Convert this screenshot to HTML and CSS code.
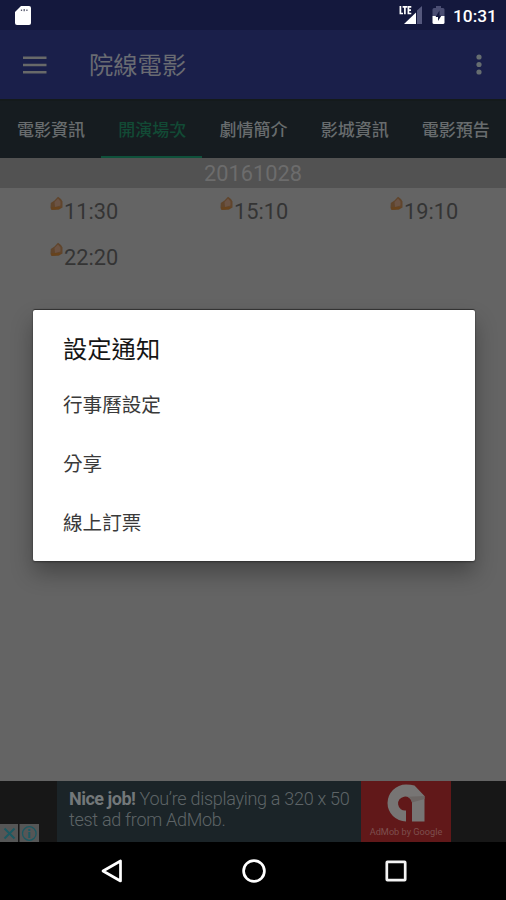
FILE: index.html
```html
<!DOCTYPE html>
<html lang="zh-Hant">
<head>
<meta charset="utf-8">
<title>院線電影</title>
<link rel="stylesheet" href="styles.css">
</head>
<body>
<svg class="defs" width="0" height="0" aria-hidden="true">
  <symbol id="ticket" viewBox="0 0 13 15">
    <path d="M.8 7 4.500 4.500 8 .8l3 2.200 1.500 2.500v6L9 13.600 1.500 14 .5 12z" fill="#60452c"/>
    <path d="M4.500 6 8 2.500l2.500 3v4L5 11z" fill="#6b5344"/>
    <path d="M1 11.500 6 11l5 0-2 2.300-7 .5z" fill="#68431c"/>
  </symbol>
</svg>
<div class="screen">
  <header class="status">
    <svg class="sd" width="18" height="21" viewBox="0 0 18 21"><path d="M7 1h8q2 0 2 2v15q0 2-2 2H3q-2 0-2-2V7z" fill="#fff"/><path d="M7.500 4.500v1.500M10.200 4v2.200M12.900 4.500v1.500" stroke="#5b5d70" stroke-width="1.300"/></svg>
    <svg class="signal" width="24" height="20" viewBox="0 0 24 20"><path d="M18 5.500 23 1v18h-5z" fill="#55587d"/><path d="M17 7.500V19H5z" fill="#fff"/><path d="M1.400 1v7.500H4M3.600 1.800h4.600M5.900 1.800V9.300M12.300 1.800H9.400V8.500H12.300M9.500 5.100H12" fill="none" stroke="#fff" stroke-width="1.700"/></svg>
    <svg class="battery" width="13" height="20" viewBox="0 0 13 20"><path d="M4 1h5v2h2q1.500 0 1.500 1.500V11H.5V4.500Q.5 3 2 3h2z" fill="#4b4e73"/><path d="M.5 11h12v6.500q0 1.500-1.500 1.500H2Q.5 19 .5 17.500z" fill="#fff"/><path d="M7.500 5.500 3.500 12H6v4L9.500 10.500H7.500z" fill="#15193f"/></svg>
    <span class="clock">10:31</span>
  </header>
  <div class="appbar">
    <svg class="menu" width="24" height="18" viewBox="0 0 24 18"><path d="M0 1.800h23.500M0 9h23.500M0 16.200h23.500" stroke="#686969" stroke-width="2.500"/></svg>
    <h1>院線電影</h1>
    <svg class="more" width="6" height="21" viewBox="0 0 6 21"><g fill="#666d70"><circle cx="3" cy="3" r="2.600"/><circle cx="3" cy="10.500" r="2.600"/><circle cx="3" cy="18" r="2.600"/></g></svg>
  </div>
  <nav class="tabs">
    <span>電影資訊</span><span class="active">開演場次</span><span>劇情簡介</span><span>影城資訊</span><span>電影預告</span>
  </nav>
  <div class="date">20161028</div>
  <main class="times">
    <div class="time"><svg width="13" height="15"><use href="#ticket"/></svg><span>11:30</span></div>
    <div class="time"><svg width="13" height="15"><use href="#ticket"/></svg><span>15:10</span></div>
    <div class="time"><svg width="13" height="15"><use href="#ticket"/></svg><span>19:10</span></div>
    <div class="time"><svg width="13" height="15"><use href="#ticket"/></svg><span>22:20</span></div>
  </main>
  <div class="ad">
    <div class="adside">
      <svg width="39" height="18" viewBox="0 0 39 18"><path d="M0 0h18v18H0zM19.500 0H39v18H19.500z" fill="#555656"/><path d="m4.500 4.500 10 10m0-10-10 10" stroke="#1c5962" stroke-width="2"/><circle cx="29.300" cy="9.500" r="6.800" fill="none" stroke="#1c5962" stroke-width="1.300"/><path d="M29.300 8v6M29.300 5v2" stroke="#1c5962" stroke-width="2"/></svg>
    </div>
    <div class="adtext"><b>Nice job!</b> You’re displaying a 320 x 50<br>test ad from AdMob.</div>
    <div class="adlogo">
      <svg width="38" height="38" viewBox="0 0 38 38"><path d="M19 37.500V26.500A7 7 0 1 1 25 18.500V37.500H37.500V12L27.500 1.500Q24 .5 19 .5A18.500 18.500 0 0 0 19 37.500z" fill="#777574"/><path d="M21 12.700 37.500 12v3L25 18.500Q24.500 14.500 21 12.700z" fill="#6c6664"/></svg>
      <span>AdMob by Google</span>
    </div>
    <div class="adend"></div>
  </div>
  <footer class="navbar">
    <svg width="22" height="24" viewBox="0 0 22 24"><path d="M19.500 2v20L2 12z" fill="none" stroke="#fff" stroke-width="2.700" stroke-linejoin="round"/></svg>
    <svg width="24" height="24" viewBox="0 0 24 24"><circle cx="12" cy="12" r="10.400" fill="none" stroke="#fff" stroke-width="2.700"/></svg>
    <svg width="22" height="22" viewBox="0 0 22 22"><rect x="1.800" y="1.800" width="18.400" height="18.400" rx=".6" fill="none" stroke="#f4f4f4" stroke-width="2.700"/></svg>
  </footer>
  <section class="dialog">
    <h2>設定通知</h2>
    <ul><li>行事曆設定</li><li>分享</li><li>線上訂票</li></ul>
  </section>
</div>
</body>
</html>
```

FILE: styles.css
```css
* { box-sizing: border-box; }
body { margin: 0; font-family: Roboto, "Noto Sans CJK TC", sans-serif; }
h1, h2, ul { margin: 0; padding: 0; font-weight: 400; list-style: none; }
svg { display: block; flex: none; }
.defs { position: absolute; }
.screen { position: relative; width: 506px; height: 900px; display: flex; flex-direction: column; background: #646464; overflow: hidden; }
.status { height: 30px; background: #14183d; display: flex; align-items: center; padding: 0 10px 0 14px; color: #fff; }
.signal { margin-left: auto; }
.battery { margin: 0 8px 0 9px; }
.clock { font-size: 17.3px; font-weight: 500; width: 43px; line-height: 30px; padding-top: 2px; white-space: nowrap; }
.appbar { height: 69px; background: #1a1f4a; display: flex; align-items: center; padding: 0 24px 0 23px; }
.appbar h1 { margin-left: 42px; font-size: 24.300px; color: #696b72; line-height: 68px; padding-top: 2px; }
.more { margin-left: auto; }
.tabs { height: 59px; background: #161c20; border-top: 2px solid #141a1b; display: grid; grid-template-columns: repeat(5, 101.200px); }
.tabs span { text-align: center; font-size: 17px; font-weight: 500; line-height: 57px; color: #686c6e; height: 57px; padding: 1px 0 0 1px; }
.tabs .active { color: #124a35; border-bottom: 2px solid #0f513b; }
.date { height: 30px; background: #525252; color: #6c6c6c; text-align: center; font-size: 21.800px; line-height: 32px; }
.times { flex: 1; display: grid; grid-template-columns: repeat(3, 170px); grid-auto-rows: 45.500px; align-content: start; }
.time { display: flex; padding: 8px 0 0 50px; font-size: 21.800px; line-height: 32px; color: #343434; }
.time span { margin-left: 1px; }
.ad { height: 61px; background: #171717; display: flex; }
.adside { width: 57px; display: flex; align-items: flex-end; }
.adtext { width: 304px; background: #1b2428; color: #5e6467; font-size: 18px; letter-spacing: -.29px; line-height: 20.500px; padding: 8px 0 0 12px; font-weight: 300; white-space: nowrap; }
.adtext b { font-weight: 700; color: #73787a; letter-spacing: -.5px; }
.adlogo { width: 90px; background: #611819; display: flex; flex-direction: column; align-items: center; padding-top: 3px; }
.adlogo span { font: 9.200px/12px Roboto, sans-serif; color: #7d4f4e; margin-top: 4px; white-space: nowrap; }
.navbar { height: 58px; background: #000; display: flex; justify-content: space-between; align-items: center; padding: 0 99px 0 101px; }
.dialog { position: absolute; left: 33px; top: 310px; width: 442px; height: 251px; background: #fff; border-radius: 2px; padding: 22px 30px 0; box-shadow: 0 -1px 1px rgba(0,0,0,.5), 0 1px 2px rgba(0,0,0,.4), 0 12px 22px rgba(0,0,0,.3); }
.dialog h2 { font-size: 24.300px; line-height: 36px; color: #151515; }
.dialog li { height: 59px; line-height: 59px; font-size: 19.600px; color: #3a3a3a; }
.dialog ul { margin-top: 8px; }
```
